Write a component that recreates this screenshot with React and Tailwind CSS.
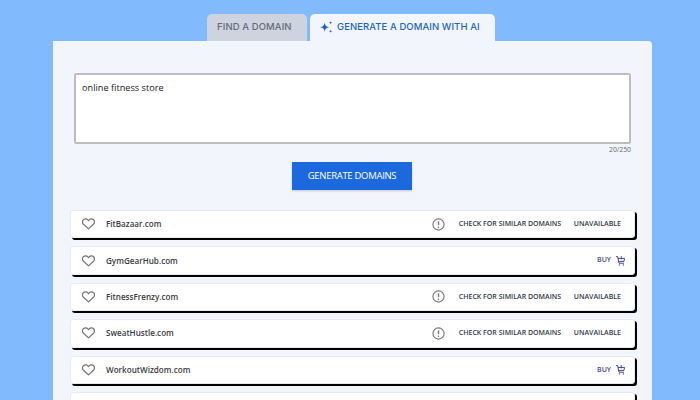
import React from "react";

const rows = [
  ["FitBazaar.com", false],
  ["GymGearHub.com", true],
  ["FitnessFrenzy.com", false],
  ["SweatHustle.com", false],
  ["WorkoutWizdom.com", true],
  ["", null],
];

function Sparkle() {
  return (
    <svg width="13" height="13" viewBox="0 0 13 13" fill="#1c64c4" className="mr-[4px]">
      <path d="M4.7 1.5 C5.2 4.7 6 5.6 9.4 6.2 C6 6.8 5.2 7.7 4.7 10.9 C4.2 7.7 3.4 6.8 0 6.2 C3.4 5.6 4.2 4.7 4.7 1.5Z" />
      <path d="M10.6 0 C10.8 1.1 11.1 1.4 12.3 1.7 C11.1 2 10.8 2.3 10.6 3.4 C10.4 2.3 10.1 2 8.9 1.7 C10.1 1.4 10.4 1.1 10.6 0Z" />
      <path d="M10.6 8.6 C10.8 9.7 11.1 10 12.3 10.3 C11.1 10.6 10.8 10.9 10.6 12 C10.4 10.9 10.1 10.6 8.9 10.3 C10.1 10 10.4 9.7 10.6 8.6Z" />
    </svg>
  );
}

function Alert() {
  return (
    <svg width="13" height="13" viewBox="0 0 13 13" fill="none" className="mr-[14px]">
      <circle cx="6.5" cy="6.5" r="5.6" stroke="#777777" strokeWidth="1.1" />
      <path d="M6.5 3.4V7.2" stroke="#777777" strokeWidth="1.4" />
      <circle cx="6.5" cy="9.2" r="0.8" fill="#777777" />
    </svg>
  );
}

function HeartIcon() {
  return (
    <svg width="13" height="12" viewBox="0 0 13 12" fill="none" className="shrink-0">
      <path d="M6.5 10.9 L1.5 6.2 C0.2 4.9 0.2 2.9 1.4 1.7 C2.7 0.5 4.7 0.6 5.8 1.9 L6.5 2.7 L7.2 1.9 C8.3 0.6 10.3 0.5 11.6 1.7 C12.8 2.9 12.8 4.9 11.5 6.2 Z" stroke="#767676" strokeWidth="1.25" strokeLinejoin="round" />
    </svg>
  );
}

function Cart() {
  return (
    <svg width="9" height="10" viewBox="0 0 9 10" fill="none" stroke="#45458a" strokeWidth="1">
      <path d="M0 0.6H1.6L3 7.2H8" />
      <path d="M2 2.4H8.6L7.9 5.4H2.6" />
      <path d="M5.3 0V3.4" strokeWidth="0.9" />
      <circle cx="3.4" cy="8.9" r="0.7" fill="#45458a" stroke="none" />
      <circle cx="7.4" cy="8.9" r="0.7" fill="#45458a" stroke="none" />
    </svg>
  );
}

function Row({ name, buy }) {
  return (
    <div className="h-[28.4px] shrink-0 flex items-center bg-white rounded-[3px] border border-[#e8ebf0] shadow-[2px_2px_0_#000] pl-[11px]">
      {buy !== null && (
        <>
          <HeartIcon />
          <span className="ml-[11px] text-[8.1px] font-semibold text-[#3a3d42]">{name}</span>
          <div className="flex-1" />
          {buy ? (
            <div className="flex items-center text-[#4a4a88] pr-[9px]">
              <span className="text-[7px] font-semibold mr-[5px]">BUY</span>
              <Cart />
            </div>
          ) : (
            <div className="flex items-center pr-[13px]">
              <Alert />
              <span className="text-[7px] font-semibold text-[#2f3a45] w-[115px]">CHECK FOR SIMILAR DOMAINS</span>
              <span className="text-[7px] font-semibold text-[#2f3a45]">UNAVAILABLE</span>
            </div>
          )}
        </>
      )}
    </div>
  );
}

export default function App() {
  return (
    <div className="w-[700px] h-[400px] overflow-hidden bg-[#82bbfd] flex flex-col pl-[53px] font-['Open_Sans',sans-serif]">
      <div className="flex w-[599px] pl-[154px] gap-[3px] pt-[14px] h-[41px] shrink-0 font-['Inter',sans-serif]">
        <div className="w-[100px] rounded-t-[5px] bg-[#cdd3df] text-[#646b78] text-[9.5px] font-medium flex items-center pl-[10px] tracking-[0.1px]">FIND A DOMAIN</div>
        <div className="w-[185px] rounded-t-[5px] bg-[#f2f6fc] text-[#2165ba] text-[9.5px] font-medium flex items-center pl-[10px] tracking-[0.08px]">
          <Sparkle />
          GENERATE A DOMAIN WITH AI
        </div>
      </div>
      <div className="w-[599px] flex-1 bg-[#f2f6fc] rounded-tr-[4px] flex flex-col px-[17px] pt-[32px] min-h-0">
        <div className="mx-[4px] h-[71px] shrink-0 bg-white border-2 border-[#bdbdbd] rounded-[2px] px-[6px] py-[5px] text-[9.2px] text-[#222] leading-[16px]">online fitness store</div>
        <div className="mx-[4px] text-right text-[6.8px] text-[#666] leading-[10px] mt-[1px] h-[10px]">20/250</div>
        <div className="self-start ml-[222px] mt-[7px] w-[120px] h-[28px] shrink-0 bg-[#1b69dc] text-white text-[9.5px] font-medium tracking-[-0.3px] flex items-center justify-center shadow-[0_1px_2px_rgba(0,0,0,0.2)]">GENERATE DOMAINS</div>
        <div className="mt-[20px] flex flex-col gap-[8px]">
          {rows.map(([n, b], i) => (
            <Row key={i} name={n} buy={b} />
          ))}
        </div>
      </div>
    </div>
  );
}
